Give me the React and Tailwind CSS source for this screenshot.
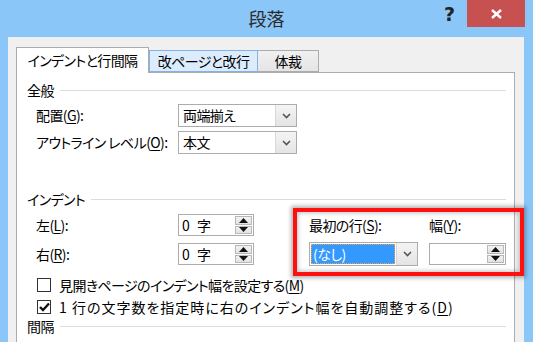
import React from 'react';

const jp = "font-['Noto_Sans_CJK_JP',sans-serif] [font-feature-settings:'palt']";

const Key = ({ children }) => <span className="underline underline-offset-2">{children}</span>;

const SectionHeader = ({ title }) => (
  <div className="flex items-center h-[16px] gap-[6px] pr-[8px]">
    <span className="leading-none">{title}</span>
    <div className="flex-1 h-px bg-[#dcdcdc]"></div>
  </div>
);

const Chevron = () => (
  <svg width="9" height="6" viewBox="0 0 9 6">
    <path d="M1 1 L4.5 4.5 L8 1" fill="none" stroke="#555" strokeWidth="1.6" />
  </svg>
);

const Dropdown = ({ value, className = '', selected = false }) => (
  <div className={`flex border border-[#acacac] bg-white ${className}`}>
    <div className="flex-1 flex items-center p-[1px]">
      {selected ? (
        <div className="h-full w-full flex items-center px-[2px] bg-[#3399ff] text-white outline-1 outline-dotted outline-[#f0a040] -outline-offset-1">
          {value}
        </div>
      ) : (
        <span className="px-[3px]">{value}</span>
      )}
    </div>
    <div className="w-[21px] flex items-center justify-center bg-gradient-to-b from-[#f4f4f4] to-[#e4e4e4] border-l border-[#d8d8d8]">
      <Chevron />
    </div>
  </div>
);

const Tri = ({ up }) => (
  <svg width="9" height="5" viewBox="0 0 9 5">
    <path d={up ? 'M0 5 L4.5 0 L9 5 Z' : 'M0 0 L4.5 5 L9 0 Z'} fill="#111" />
  </svg>
);

const Spinner = ({ value, className = '' }) => (
  <div className={`flex border border-[#acacac] bg-white ${className}`}>
    <div className="flex-1 flex items-center pl-[3px] tracking-[2px]">{value}</div>
    <div className="w-[19px] flex flex-col p-[1px] gap-px">
      <div className="flex-1 flex items-center justify-center bg-gradient-to-b from-[#f2f2f2] to-[#e2e2e2] border border-[#b8b8b8]">
        <Tri up />
      </div>
      <div className="flex-1 flex items-center justify-center bg-gradient-to-b from-[#f2f2f2] to-[#e2e2e2] border border-[#b8b8b8]">
        <Tri />
      </div>
    </div>
  </div>
);

const Checkbox = ({ checked, className = '', children }) => (
  <div className="flex items-center h-[16px] gap-[8px] pl-[10px]">
    <div className="w-[14px] h-[14px] border border-[#333] bg-white flex items-center justify-center">
      {checked && (
        <svg width="11" height="10" viewBox="0 0 11 10">
          <path d="M1 5 L4 8 L10 1.5" fill="none" stroke="#111" strokeWidth="2.4" />
        </svg>
      )}
    </div>
    <span className={`leading-none whitespace-nowrap ${className}`}>{children}</span>
  </div>
);

export default function App() {
  return (
    <div className={`w-[533px] h-[342px] overflow-hidden bg-[#8bc6f8] flex flex-col ${jp}`}>
      {/* Title bar */}
      <div className="h-[37px] flex items-start shrink-0">
        <div className="flex-1"></div>
        <div className="pt-[8px] text-[18px] leading-[20px] text-[#2b2b2b]">段落</div>
        <div className="flex-1 flex justify-end items-start">
          <div className="mt-[5px] mr-[12px] text-[19px] font-bold leading-[18px] text-[#222] font-['DejaVu_Sans',sans-serif]">?</div>
          <div className="w-[58px] h-[27px] bg-[#c75050] flex items-center justify-center mr-[8px]">
            <svg width="11" height="10" viewBox="0 0 11 10">
              <path d="M1 1 L10 9 M10 1 L1 9" stroke="#fff" strokeWidth="2.4" />
            </svg>
          </div>
        </div>
      </div>

      {/* Dialog body */}
      <div className="flex-1 ml-[8px] mr-[9px] bg-[#f0f0f0] pt-[10px] pl-[8px] text-[14px] tracking-[-0.6px] text-black">
        {/* Tabs */}
        <div className="flex items-end h-[25px] relative z-10">
          <div className="w-[133px] h-[26px] -mb-px bg-white border border-b-0 border-[#acacac] flex items-center justify-center pb-[1px]">
            インデントと行間隔
          </div>
          <div className="w-[109px] h-[22px] bg-[#dcecfc] border border-[#7eb4ea] flex items-center justify-center">
            改ページと改行
          </div>
          <div className="w-[61px] h-[22px] bg-gradient-to-b from-[#f0f0f0] to-[#e5e5e5] border border-l-0 border-[#acacac] flex items-center justify-center">
            体裁
          </div>
        </div>

        {/* Panel */}
        <div className="relative w-[499px] h-[280px] bg-white border border-[#acacac] pl-[10px] pt-[9px]">
          <SectionHeader title="全般" />

          <div className="mt-[6px] flex flex-col gap-[4px] pl-[9px]">
            <div className="flex items-center">
              <span className="w-[142px]">配置(<Key>G</Key>):</span>
              <Dropdown value="両端揃え" className="w-[119px] h-[23px]" />
            </div>
            <div className="flex items-center">
              <span className="w-[142px] whitespace-nowrap">アウトライン レベル(<Key>O</Key>):</span>
              <Dropdown value="本文" className="w-[119px] h-[23px]" />
            </div>
          </div>

          <div className="mt-[37px]">
            <SectionHeader title="インデント" />
          </div>

          <div className="mt-[7px] pl-[9px] grid grid-cols-[142px_76px_55px_109px_11px_77px] grid-rows-[22px_24px] gap-y-[6px] items-center">
            <span>左(<Key>L</Key>):</span>
            <Spinner value="0 字" className="h-[22px]" />
            <span></span>
            <span className="whitespace-nowrap">最初の行(<Key>S</Key>):</span>
            <span></span>
            <span>幅(<Key>Y</Key>):</span>

            <span>右(<Key>R</Key>):</span>
            <Spinner value="0 字" className="h-[22px]" />
            <span></span>
            <Dropdown value="(なし)" selected className="h-[24px]" />
            <span></span>
            <Spinner value="" className="h-[22px]" />
          </div>

          <div className="mt-[11px] flex flex-col gap-[6px]">
            <Checkbox>見開きページのインデント幅を設定する(<Key>M</Key>)</Checkbox>
            <Checkbox checked className="tracking-[1px]">1 行の文字数を指定時に右のインデント幅を自動調整する(<Key>D</Key>)</Checkbox>
          </div>

          <div className="mt-[3px]">
            <SectionHeader title="間隔" />
          </div>

          {/* Highlight */}
          <div className="absolute left-[276px] top-[135px] w-[231px] h-[68px] border-[4px] border-[#ff1010] shadow-[0_0_4px_2px_rgba(0,0,0,0.3),inset_0_0_4px_1px_rgba(0,0,0,0.25)] pointer-events-none"></div>
        </div>
      </div>
    </div>
  );
}
